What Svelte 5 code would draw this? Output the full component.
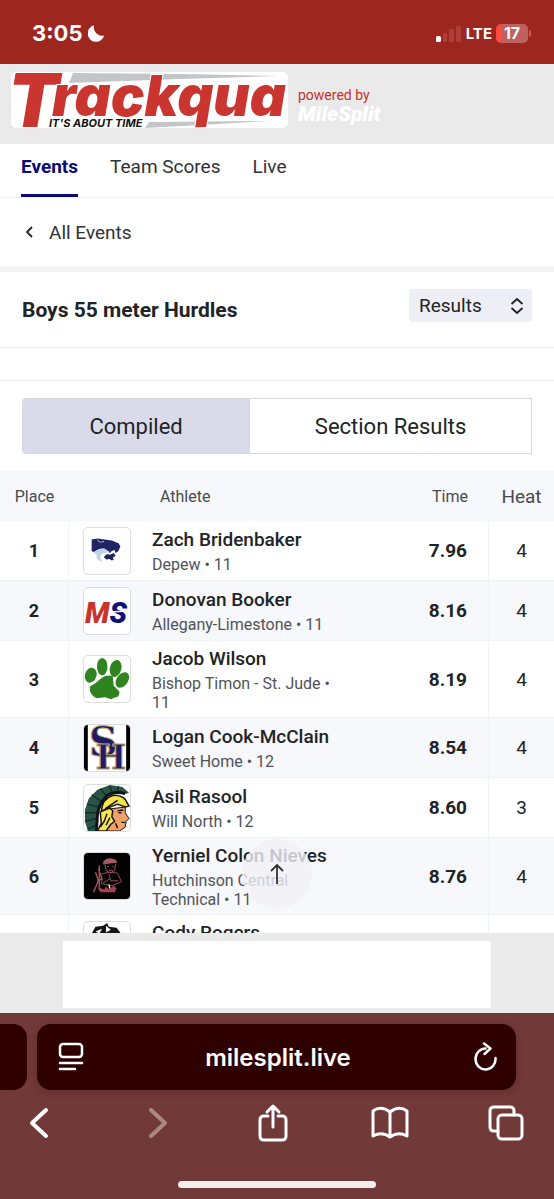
<script lang="ts">
  interface Result {
    place: number;
    name: string;
    school: string;
    grade?: number;
    time: string;
    heat: string;
    logo: string;
  }

  const TABS = ['Events', 'Team Scores', 'Live'];
  const VIEWS = ['Compiled', 'Section Results'];

  const results: Result[] = [
    { place: 1, name: 'Zach Bridenbaker', school: 'Depew', grade: 11, time: '7.96', heat: '4', logo: 'wildcat' },
    { place: 2, name: 'Donovan Booker', school: 'Allegany-Limestone', grade: 11, time: '8.16', heat: '4', logo: 'ms' },
    { place: 3, name: 'Jacob Wilson', school: 'Bishop Timon - St. Jude', grade: 11, time: '8.19', heat: '4', logo: 'paw' },
    { place: 4, name: 'Logan Cook-McClain', school: 'Sweet Home', grade: 12, time: '8.54', heat: '4', logo: 'sh' },
    { place: 5, name: 'Asil Rasool', school: 'Will North', grade: 12, time: '8.60', heat: '3', logo: 'spartan' },
    { place: 6, name: 'Yerniel Colon Nieves', school: 'Hutchinson Central Technical', grade: 11, time: '8.76', heat: '4', logo: 'engineer' },
  ];

  let activeTab = $state('Events');
  let view = $state('Compiled');
  let mode = $state('Results');
  let address = $state('milesplit.live');
  let scroller: HTMLElement;
</script>

{#snippet teamLogo(kind: string)}
  <svg class="team" viewBox="0 0 48 48" aria-hidden="true">
    {#if kind === 'wildcat'}
      <path d="M8 24V12l6-1 15 2 7 3 2 3-2 5-3 2-1-3-3 1-2 2-4-3-7-1-6 3z" fill="#1d2565" />
      <path d="M14 12q1 4 7 2" fill="none" stroke="#aebbd8" stroke-width="1" />
      <path d="M9 27q5-6 12-6l6 4-6 1q-4 1-4 4l2 5q-7-1-6-8-2-1-4 0z" fill="#bfd5e6" />
      <path d="M21 30l3-3 3 1 4-2 2 3-3 2 1 2-2 1-3-2-2 1-3-2z" fill="#1d2565" />
    {:else if kind === 'ms'}
      <text x="1" y="36" font-size="30" class="ms"><tspan fill="#c8342c">M</tspan><tspan fill="#10107a">S</tspan></text>
      <path d="M27 25l18-1" stroke="#fff" stroke-width="1.500" />
    {:else if kind === 'paw'}
      <g fill="#2f8420">
        <ellipse cx="7" cy="20" rx="6" ry="8" transform="rotate(18 7 20)" />
        <ellipse cx="19" cy="11" rx="5.500" ry="9" />
        <ellipse cx="33" cy="13" rx="6" ry="9" transform="rotate(14 33 13)" />
        <ellipse cx="40" cy="25" rx="6" ry="9" transform="rotate(35 40 25)" />
        <path d="M6 32q6-3 11-8 6-5 13-3l1 10 6 6q0 6-4 6l-5 2-6-2-9 1q-8-4-7-12z" />
      </g>
    {:else if kind === 'sh'}
      <rect width="48" height="48" fill="#fff" />
      <rect width="4" height="48" fill="#000" />
      <rect x="44" width="4" height="48" fill="#000" />
      <g class="slab" fill="#201b62" stroke="#c1aa76" stroke-width="1">
        <text x="5" y="32" font-size="42">S</text>
        <text x="12" y="46" font-size="34">H</text>
      </g>
    {:else if kind === 'spartan'}
      <path d="M4 48L1 38 1 26 5 14 14 5 27 0 40 2l7 6-3 1-9-2-9 3-9 11-3 12-1 15z" fill="#285347" />
      <path d="M4 46l9-4M1 38l12-3M1 29l13 0M3 20l13 3M8 10l10 7M17 4l6 7M27 1l2 6M36 1l-1 5" stroke="#153027" stroke-width="1.500" />
      <path d="M13 48l1-16q1-12 10-21 8-5 19-2" fill="none" stroke="#111" stroke-width="3" />
      <path d="M27 25l16-2 0 6 4 6-3 3-1 6-6 4H22z" fill="#f2a06a" stroke="#111" stroke-width="1" />
      <path d="M18 28q1-14 12-17 8-1 13 4l4 7-4 1-8-3-8 3-8 4z" fill="#f5e54a" stroke="#111" stroke-width="1.500" />
      <path d="M17 28l10-4 3 3-1 6 3 5-4 3-5 7H14l4-8z" fill="#f5e54a" stroke="#111" stroke-width="1.500" />
      <path d="M22 25l13-9M24 30l-3 8-4 6M27 34l-4 8" fill="none" stroke="#111" stroke-width="1.500" />
      <path d="M35 27l6-1M36 29h3M39 39h4M33 40l2 5" fill="none" stroke="#111" stroke-width="1.500" />
    {:else if kind === 'engineer'}
      <rect width="48" height="48" fill="#030303" />
      <path d="M20 9q5-6 13-2l2 3-15 2z" fill="#a95a60" />
      <path d="M22 12l1 6 4 3 5-3 1-7M24 14h2M29 14h2M26 18h4" fill="none" stroke="#a1545b" stroke-width="1" />
      <path d="M18 22l8-2 9 1 4 9-9 4-12-2 1-5M26 22l2 7 8 0M20 31l7-4" fill="none" stroke="#93505a" stroke-width="1" />
      <path d="M16 13v26M12 20l3 9-5 12M15 17l4 10-5 2" fill="none" stroke="#a1545b" stroke-width="1.500" />
      <path d="M16 36l5 2 2-3 3 3 5-4 3 3-2 4-15 0z" fill="#a63f4e" />
      <path d="M26 33l1 4" stroke="#eed" stroke-width="1.500" />
    {:else}
      <path d="M8 12l4-7 8-1 4-3 2 4 8 1 6 8v34H8z" fill="#151515" />
      <path d="M12 10l7-3-3 5zM23 4v7l5-3zM31 9l6 3" fill="#fff" />
    {/if}
  </svg>
{/snippet}

<div class="screen">
  <header class="status">
    <div class="clock">
      <span>3:05</span>
      <svg width="17" height="17" viewBox="0 0 17 17" aria-hidden="true">
        <path d="M6 .3A8.400 8.400 0 1 0 16.200 10.500A8.500 8.500 0 0 1 6 .3z" fill="#fff" />
      </svg>
    </div>
    <div class="signal">
      <svg width="26" height="17" viewBox="0 0 26 17" aria-hidden="true">
        <rect x="0" y="11" width="5" height="6" rx="1.500" fill="#fff" />
        <g fill="#b03f39">
          <rect x="7" y="8" width="4" height="9" rx="1.500" />
          <rect x="13" y="4" width="5" height="13" rx="1.500" />
          <rect x="20" y="1" width="5" height="16" rx="1.500" />
        </g>
      </svg>
      <span class="lte">LTE</span>
      <span class="battery">17</span>
    </div>
  </header>

  <div class="brand">
    <svg class="brand-logo" width="277" height="56" viewBox="0 0 277 56" role="img" aria-label="Trackqua">
      <rect width="277" height="56" rx="5" fill="#fff" />
      <path d="M62 1l108 1 97 2-97 3L58 11z" fill="#c3c6c9" />
      <path d="M138 50l122-1-70 4-56 3z" fill="#c3c6c9" />
      <text x="-3" y="55" class="wordmark"><tspan font-size="74">T</tspan><tspan x="41" y="44" font-size="56">rackqua</tspan></text>
      <text x="38" y="55" font-size="11" class="tagline">IT'S ABOUT TIME</text>
    </svg>
    <div class="powered">
      <span>powered by</span>
      <strong>MileSplit</strong>
    </div>
  </div>

  <nav class="tabs">
    {#each TABS as tab}
      <a href="#{tab}" class:active={tab === activeTab} onclick={() => (activeTab = tab)}>{tab}</a>
    {/each}
  </nav>

  <main bind:this={scroller}>
    <a class="back" href="#events">
      <svg width="16" height="16" viewBox="0 0 16 16" aria-hidden="true">
        <path d="M11 3L6 8l5 5" fill="none" stroke="#222" stroke-width="1.800" />
      </svg>
      All Events
    </a>

    <div class="event">
      <h1>Boys 55 meter Hurdles</h1>
      <div class="mode">
        <select aria-label="View" bind:value={mode}>
          <option>Results</option>
          <option>Entries</option>
        </select>
        <svg width="16" height="18" viewBox="0 0 16 18" aria-hidden="true">
          <path d="M2.500 7L8 2l5.500 5M2.500 11L8 16l5.500-5" fill="none" stroke="#222" stroke-width="1.800" />
        </svg>
      </div>
    </div>

    <div class="spacer"></div>

    <div class="views">
      {#each VIEWS as v}
        <button class:active={v === view} onclick={() => (view = v)}>{v}</button>
      {/each}
    </div>

    <table>
      <colgroup>
        <col class="c-place" />
        <col class="c-logo" />
        <col />
        <col class="c-time" />
        <col class="c-heat" />
      </colgroup>
      <thead>
        <tr>
          <th>Place</th>
          <th></th>
          <th class="athlete-head">Athlete</th>
          <th class="time-head">Time</th>
          <th class="heat-head">Heat</th>
        </tr>
      </thead>
      <tbody>
        {#each results as r}
          <tr>
            <td class="place">{r.place}</td>
            <td class="logo">{@render teamLogo(r.logo)}</td>
            <td class="athlete">
              <div class="name">{r.name}</div>
              <div class="school">{r.school} • {r.grade}</div>
            </td>
            <td class="time">{r.time}</td>
            <td class="heat">{r.heat}</td>
          </tr>
        {/each}
        <tr>
          <td class="place"></td>
          <td class="logo">{@render teamLogo('horse')}</td>
          <td class="athlete next"><div class="name">Cody Rogers</div></td>
          <td class="time"></td>
          <td class="heat"></td>
        </tr>
      </tbody>
    </table>
  </main>

  <div class="ad">
    <button class="to-top" aria-label="Back to top" onclick={() => scroller.scrollTo(0, 0)}>
      <svg width="16" height="22" viewBox="0 0 16 22" aria-hidden="true">
        <path d="M8 21V2M2 8l6-6 6 6" fill="none" stroke="#333" stroke-width="1.800" />
      </svg>
    </button>
    <div class="ad-slot"></div>
  </div>

  <footer class="browser">
    <div class="address-row">
      <div class="prev-page"></div>
      <div class="address">
        <button aria-label="Page menu">
          <svg width="26" height="30" viewBox="0 0 26 30" aria-hidden="true">
            <g fill="none" stroke="#fff" stroke-width="2.500" stroke-linecap="round">
              <rect x="2" y="2" width="22" height="13" rx="3" />
              <path d="M2 21h22M2 27h15" />
            </g>
          </svg>
        </button>
        <input aria-label="Address" bind:value={address} />
        <button aria-label="Reload">
          <svg width="26" height="30" viewBox="0 0 26 30" aria-hidden="true">
            <path d="M13.500 6.500A10 10.500 0 1 0 23.500 16M12 1.500l6.500 5-6 5.500" fill="none" stroke="#fff" stroke-width="2.500" stroke-linecap="round" stroke-linejoin="round" />
          </svg>
        </button>
      </div>
    </div>

    <div class="toolbar">
      <button aria-label="Back">
        <svg width="40" height="40" viewBox="0 0 40 40"><path d="M26 7L12 20l14 13" stroke-width="4" /></svg>
      </button>
      <button aria-label="Forward" disabled>
        <svg width="40" height="40" viewBox="0 0 40 40"><path d="M14 7l14 13-14 13" stroke-width="4" /></svg>
      </button>
      <button aria-label="Share">
        <svg width="40" height="40" viewBox="0 0 40 40">
          <path d="M15 13h-4q-4 0-4 4v16q0 4 4 4h18q4 0 4-4V17q0-4-4-4h-4M20 24V3M14 9l6-6 6 6" />
        </svg>
      </button>
      <button aria-label="Bookmarks">
        <svg width="40" height="40" viewBox="0 0 40 40">
          <path d="M20 9Q11 2 3 8v25q9-5 17 1 8-6 17-1V8q-8-6-17 1zM20 9v25" />
        </svg>
      </button>
      <button aria-label="Tabs">
        <svg width="40" height="40" viewBox="0 0 40 40">
          <rect x="12" y="12" width="24" height="24" rx="4" />
          <path d="M12 28H8q-4 0-4-4V8q0-4 4-4h16q4 0 4 4v4" />
        </svg>
      </button>
    </div>
    <div class="home"></div>
  </footer>
</div>

<style>
  :global(body) {
    background: #fff;
  }

  .screen {
    display: flex;
    flex-direction: column;
    height: 100vh;
    overflow: hidden;
    font-family: Roboto, "Liberation Sans", sans-serif;
    color: #212326;
  }

  button,
  select,
  input {
    font: inherit;
    color: inherit;
  }

  .ms {
    font-family: Roboto, sans-serif;
    font-weight: 900;
    font-style: italic;
  }

  /* status bar */
  .status {
    flex: none;
    display: flex;
    align-items: center;
    justify-content: space-between;
    height: 64px;
    padding: 2px 26px 0 32px;
    box-sizing: border-box;
    background: #9d261f;
    color: #fff;
    font-family: Inter, sans-serif;
    font-weight: 700;
  }

  .clock {
    display: flex;
    align-items: center;
    gap: 6px;
    font-size: 22px;
  }

  .signal {
    display: flex;
    align-items: center;
    gap: 4px;
  }

  .lte {
    font-size: 15px;
  }

  .battery {
    position: relative;
    width: 32px;
    line-height: 19px;
    border-radius: 5px;
    background: linear-gradient(90deg, #fb4a3e 5px, #bd625e 5px);
    font-size: 16px;
    text-align: center;
  }

  .battery::after {
    content: "";
    position: absolute;
    top: 6px;
    left: 33px;
    width: 2px;
    height: 7px;
    border-radius: 0 2px 2px 0;
    background: #bd625e;
  }

  /* brand */
  .brand {
    flex: none;
    display: flex;
    gap: 10px;
    height: 80px;
    padding: 8px 11px;
    box-sizing: border-box;
    background: #eaeaea;
  }

  .wordmark,
  .tagline {
    font-family: Inter, sans-serif;
    font-style: italic;
    stroke: #fff;
    stroke-width: 2px;
    paint-order: stroke;
  }

  .wordmark {
    font-weight: 900;
    fill: #cb3530;
  }

  .tagline {
    font-weight: 700;
    fill: #111;
  }

  .powered {
    display: flex;
    flex-direction: column;
    padding-top: 14px;
    color: #c8312b;
    font-size: 14px;
    line-height: 18px;
  }

  .powered strong {
    color: #fff;
    font-size: 21px;
    font-weight: 900;
    font-style: italic;
    line-height: 20px;
  }

  /* tabs */
  .tabs {
    flex: none;
    display: flex;
    gap: 32px;
    height: 53px;
    padding: 0 21px;
    border-bottom: 1px solid #f0f0f0;
    font-size: 19px;
  }

  .tabs a {
    padding-top: 12px;
    border-bottom: 3px solid transparent;
    color: #303236;
    line-height: 22px;
    text-decoration: none;
  }

  .tabs a.active {
    border-color: #0a0a78;
    color: #0a0a78;
    font-weight: 700;
  }

  main {
    flex: 1;
    min-height: 0;
    overflow: hidden;
  }

  .back {
    display: flex;
    align-items: center;
    gap: 12px;
    height: 68px;
    padding: 0 21px;
    border-bottom: 6px solid #f3f3f3;
    color: #303236;
    font-size: 19px;
    text-decoration: none;
  }

  .event {
    display: flex;
    align-items: center;
    justify-content: space-between;
    height: 75px;
    padding: 0 22px;
    border-bottom: 1px solid #f0f0f0;
  }

  h1 {
    margin: 0;
    font-size: 21px;
    font-weight: 700;
  }

  .mode {
    position: relative;
    margin-bottom: 8px;
  }

  .mode select {
    appearance: none;
    width: 123px;
    height: 33px;
    padding: 0 10px;
    border: 0;
    border-radius: 4px;
    background: #eeeef6;
    font-size: 19px;
  }

  .mode svg {
    position: absolute;
    top: 8px;
    right: 7px;
    pointer-events: none;
  }

  .spacer {
    height: 32px;
    border-bottom: 1px solid #f0f0f0;
  }

  .views {
    display: flex;
    margin: 17px 22px;
  }

  .views button {
    flex: 228 0 0;
    height: 56px;
    padding: 0;
    border: 1px solid #d6d7dc;
    border-radius: 4px 0 0 4px;
    background: #fff;
    font-size: 22px;
  }

  .views button + button {
    flex-grow: 283;
    border-left: 0;
    border-radius: 0;
  }

  .views button.active {
    background: #d9dbea;
  }

  /* results */
  table {
    width: 100%;
    table-layout: fixed;
    border-collapse: separate;
    border-spacing: 0;
  }

  .c-place { width: 69px; }
  .c-logo { width: 83px; }
  .c-time { width: 144px; }
  .c-heat { width: 65px; }

  th {
    height: 50px;
    padding: 0;
    background: #f7f8fb;
    color: #484b50;
    font-size: 16px;
    font-weight: 400;
    box-sizing: border-box;
  }

  .athlete-head {
    padding-left: 8px;
    text-align: left;
  }

  .time-head {
    padding-right: 21px;
    text-align: right;
  }

  .heat-head {
    font-size: 19px;
  }

  td {
    height: 60px;
    padding: 5px 0;
    border-bottom: 1px solid #f1f2f5;
    box-sizing: border-box;
  }

  tbody tr:nth-child(even) {
    background: #f7f8fb;
  }

  .place {
    border-right: 1px solid #f1f2f5;
    font-size: 18px;
    font-weight: 700;
    text-align: center;
  }

  .logo {
    padding-left: 14px;
  }

  .team {
    display: block;
    width: 46px;
    height: 46px;
    border: 1px solid #ddd;
    border-radius: 5px;
    background: #fff;
  }

  .slab {
    font-family: "DejaVu Serif", serif;
    font-weight: 700;
  }

  .name {
    margin-bottom: 3px;
    font-size: 19px;
    font-weight: 500;
    line-height: 25px;
    white-space: nowrap;
  }

  .school {
    color: #505358;
    font-size: 16px;
    line-height: 19px;
  }

  .next {
    vertical-align: top;
  }

  .time {
    padding-right: 21px;
    border-right: 1px solid #f1f2f5;
    font-size: 19px;
    font-weight: 700;
    text-align: right;
  }

  .heat {
    font-size: 19px;
    text-align: center;
  }

  /* sticky ad */
  .ad {
    position: relative;
    flex: none;
    padding: 8px 63px 5px;
    background: #eaeaea;
  }

  .ad-slot {
    height: 67px;
    background: #fff;
  }

  .to-top {
    position: absolute;
    bottom: 100%;
    left: 50%;
    display: flex;
    align-items: center;
    justify-content: center;
    width: 70px;
    height: 70px;
    margin: 0 0 24px -35px;
    border: 0;
    border-radius: 50%;
    background: rgba(240, 240, 246, 0.8);
  }

  /* browser chrome */
  .browser {
    flex: none;
    height: 186px;
    padding-top: 11px;
    box-sizing: border-box;
    background: #713938;
    color: #fff;
  }

  .address-row {
    display: flex;
    gap: 10px;
    height: 66px;
    padding-right: 38px;
  }

  .prev-page {
    flex: none;
    width: 27px;
    border-radius: 0 14px 14px 0;
    background: #2f0000;
  }

  .address {
    flex: 1;
    display: flex;
    align-items: center;
    min-width: 0;
    padding: 0 13px 0 16px;
    border-radius: 14px;
    background: #2f0000;
    box-shadow: 0 2px 8px rgba(50, 0, 0, 0.2);
  }

  .address input {
    flex: 1;
    min-width: 0;
    border: 0;
    background: none;
    font-family: Inter, sans-serif;
    font-size: 24px;
    font-weight: 600;
    text-align: center;
  }

  .browser button {
    display: flex;
    align-items: center;
    justify-content: center;
    padding: 0;
    border: 0;
    background: none;
  }

  .address button {
    width: 36px;
    height: 40px;
  }

  .toolbar {
    display: flex;
    justify-content: space-between;
    padding: 13px 28px 0 20px;
  }

  .toolbar svg {
    fill: none;
    stroke: #fff;
    stroke-width: 3px;
    stroke-linecap: round;
    stroke-linejoin: round;
  }

  .toolbar button:disabled {
    opacity: 0.4;
  }

  .home {
    width: 198px;
    height: 7px;
    margin: 38px auto 0;
    border-radius: 4px;
    background: #f1eeec;
  }
</style>
